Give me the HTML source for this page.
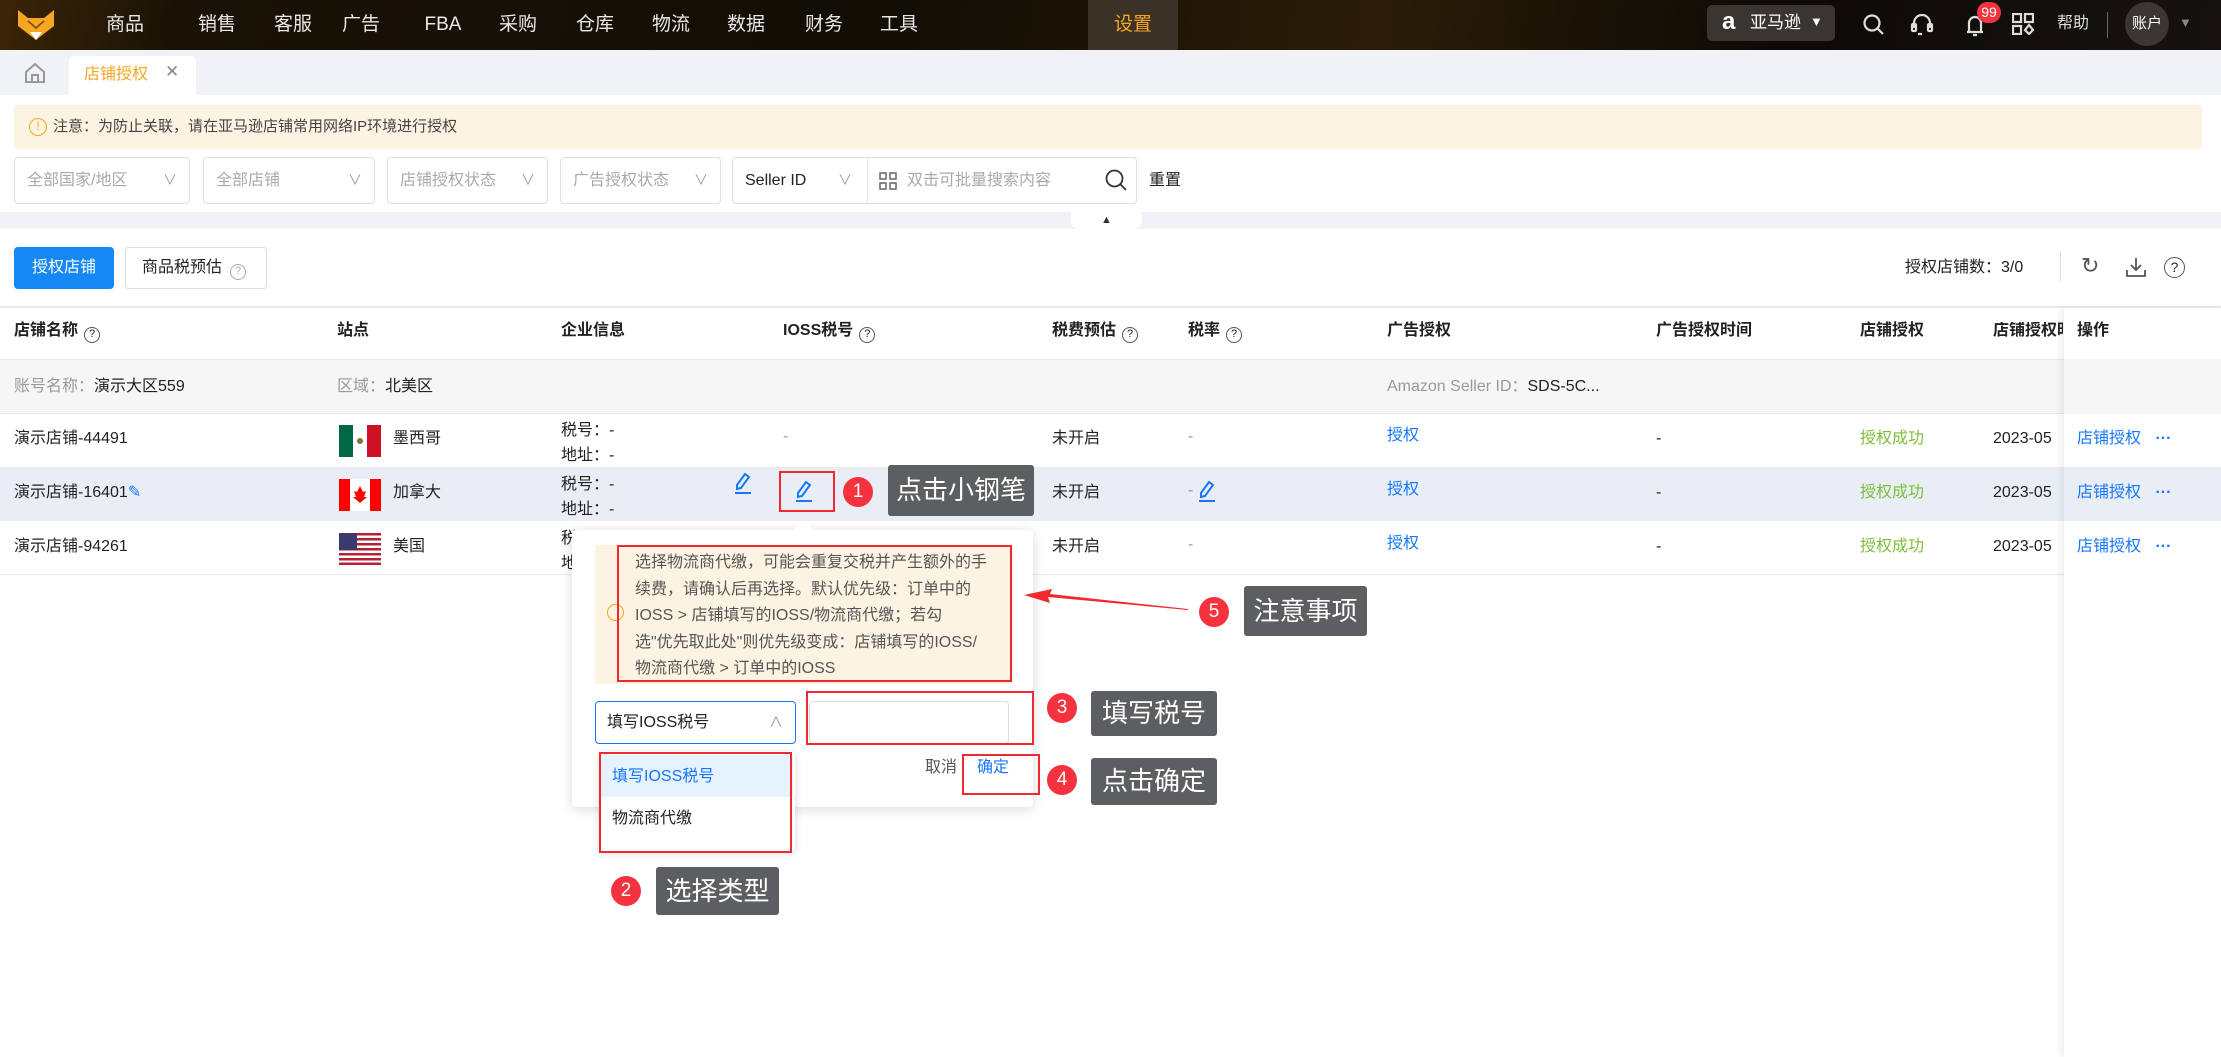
<!DOCTYPE html>
<html><head><meta charset="utf-8">
<style>
*{box-sizing:border-box;margin:0;padding:0}
body{width:2221px;height:1057px;overflow:hidden;background:#fff;font-family:"Liberation Sans","Noto Sans CJK SC",sans-serif;font-size:16px;line-height:1.15;color:#222;position:relative}
.a{position:absolute;white-space:nowrap}
.nav{left:0;top:0;width:2221px;height:50px;background:linear-gradient(100deg,#3a2506 0%,#1a1206 8%,#120d05 40%,#2a1c08 62%,#0d0a06 80%,#151210 100%)}
.ni{top:0;height:50px;line-height:50px;color:#e8e8e8;font-size:19px;transform:translateX(-50%)}
.sel{border:1px solid #dcdfe6;border-radius:4px;height:47px;top:157px;color:#aaa;line-height:45px;padding-left:12px;font-size:16px}
.sel i{position:absolute;right:12px;top:0;font-style:normal;color:#999;font-size:14px}
.th{top:322px;font-weight:bold;font-size:16px;color:#222}
.q{display:inline-block;width:16px;height:16px;border:1.5px solid #555;border-radius:50%;font-size:11px;line-height:13px;text-align:center;font-weight:normal;vertical-align:-2px;margin-left:6px}
.c{font-size:16px}
.blue{color:#1677ff}.green{color:#7cbf3a}.gray{color:#999}
.ann{background:#5d5e61;color:#fff;font-size:26px;border-radius:3px;text-align:center}
.num{width:30px;height:30px;border-radius:50%;background:#f5333f;color:#fff;text-align:center;line-height:30px;font-size:19px}
.rb{border:2.5px solid #f0292f}
</style></head><body>
<div class="a nav"></div>
<svg class="a" style="left:16px;top:8px" width="40" height="34" viewBox="0 0 40 34"><path d="M2 2 L12 10 L28 10 L38 2 L38 18 L20 32 L2 18Z" fill="#f5a623"/><path d="M14 24 L26 24 L20 32Z" fill="#fff"/><path d="M12 13 L20 20 L28 13" stroke="#7a4a08" stroke-width="1.5" fill="none"/></svg>
<div class="a ni" style="left:125px">商品</div><div class="a ni" style="left:217px">销售</div><div class="a ni" style="left:293px">客服</div><div class="a ni" style="left:361px">广告</div><div class="a ni" style="left:443px">FBA</div><div class="a ni" style="left:518px">采购</div><div class="a ni" style="left:595px">仓库</div><div class="a ni" style="left:671px">物流</div><div class="a ni" style="left:746px">数据</div><div class="a ni" style="left:824px">财务</div><div class="a ni" style="left:899px">工具</div>
<div class="a" style="left:1088px;top:0;width:90px;height:50px;background:#3b3127"></div>
<div class="a ni" style="left:1133px;color:#f5a623">设置</div>
<div class="a" style="left:1707px;top:5px;width:128px;height:36px;background:#3a3530;border-radius:5px"></div>
<div class="a" style="left:1722px;top:8px;color:#fff;font-size:24px;font-weight:bold;line-height:28px">a</div>
<div class="a" style="left:1750px;top:13px;color:#fff;font-size:17px">亚马逊</div>
<div class="a" style="left:1810px;top:15px;color:#fff;font-size:13px">▼</div>
<svg class="a" style="left:1862px;top:13px" width="24" height="24" viewBox="0 0 24 24" fill="none" stroke="#ddd" stroke-width="2.2"><circle cx="10" cy="10" r="7.5"/><path d="M15.5 15.5 L21 21"/></svg>
<svg class="a" style="left:1910px;top:12px" width="24" height="26" viewBox="0 0 24 26" fill="none" stroke="#ddd" stroke-width="2.2"><path d="M4 16 V11 a8 8 0 0 1 16 0 V16"/><rect x="2" y="12" width="4" height="7" rx="1"/><rect x="18" y="12" width="4" height="7" rx="1"/><path d="M8 22 H12"/></svg>
<svg class="a" style="left:1962px;top:12px" width="26" height="26" viewBox="0 0 26 26" fill="none" stroke="#ddd" stroke-width="2.2"><path d="M5 20 H21 M7 20 V11 a6 6 0 0 1 12 0 V20 M11 23 H15"/></svg>
<div class="a" style="left:1977px;top:2px;width:24px;height:21px;border-radius:11px;background:#f5333f;color:#fff;font-size:14px;text-align:center;line-height:21px">99</div>
<svg class="a" style="left:2012px;top:13px" width="22" height="22" viewBox="0 0 22 22" fill="none" stroke="#ddd" stroke-width="2.2"><rect x="1" y="1" width="8" height="8"/><rect x="13" y="1" width="8" height="8"/><rect x="1" y="13" width="8" height="8"/><path d="M17 12 L21 17 L17 21 L13 17Z"/></svg>
<div class="a" style="left:2057px;top:15px;color:#ddd;font-size:16px">帮助</div>
<div class="a" style="left:2107px;top:12px;width:1px;height:26px;background:#666"></div>
<div class="a" style="left:2125px;top:2px;width:44px;height:44px;border-radius:50%;background:#3a3632;color:#fff;font-size:15px;text-align:center;line-height:44px">账户</div>
<div class="a" style="left:2179px;top:16px;color:#888;font-size:13px">▼</div>
<!-- tab bar -->
<div class="a" style="left:0;top:50px;width:2221px;height:45px;background:#f1f2f5"></div>
<svg class="a" style="left:24px;top:62px" width="22" height="22" viewBox="0 0 22 22" fill="none" stroke="#999" stroke-width="2"><path d="M2 10 L11 2 L20 10 V20 H2Z M8 20 V13 H14 V20"/></svg>
<div class="a" style="left:69px;top:56px;width:127px;height:39px;background:#fff;border-radius:4px 4px 0 0"></div>
<div class="a" style="left:84px;top:66px;color:#f5a623;font-size:16px">店铺授权</div>
<div class="a" style="left:165px;top:62px;color:#888;font-size:17px">✕</div>
<!-- notice -->
<div class="a" style="left:14px;top:105px;width:2188px;height:44px;background:#fdf3e3;border-radius:3px"></div>
<div class="a" style="left:29px;top:118px;width:18px;height:18px;border:1.5px solid #f5a623;border-radius:50%;color:#f5a623;font-size:12px;text-align:center;line-height:15px">!</div>
<div class="a" style="left:53px;top:118px;font-size:15px;color:#444">注意：为防止关联，请在亚马逊店铺常用网络IP环境进行授权</div>
<!-- filters -->
<div class="a sel" style="left:14px;width:176px">全部国家/地区<i>∨</i></div>
<div class="a sel" style="left:203px;width:172px">全部店铺<i>∨</i></div>
<div class="a sel" style="left:387px;width:161px">店铺授权状态<i>∨</i></div>
<div class="a sel" style="left:560px;width:161px">广告授权状态<i>∨</i></div>
<div class="a sel" style="left:732px;width:405px;color:#222">Seller ID<i style="right:auto;left:105px">∨</i></div>
<div class="a" style="left:867px;top:158px;width:1px;height:45px;background:#e5e5e5"></div>
<svg class="a" style="left:879px;top:172px" width="18" height="18" viewBox="0 0 18 18" fill="none" stroke="#666" stroke-width="1.5"><rect x="1" y="1" width="6" height="6"/><rect x="11" y="1" width="6" height="6"/><rect x="1" y="11" width="6" height="6"/><rect x="11" y="11" width="6" height="6"/></svg>
<div class="a" style="left:907px;top:172px;color:#aaa;font-size:16px">双击可批量搜索内容</div>
<svg class="a" style="left:1104px;top:168px" width="24" height="24" viewBox="0 0 24 24" fill="none" stroke="#333" stroke-width="1.8"><circle cx="10.5" cy="10.5" r="8"/><path d="M16.5 16.5 L22 22"/></svg>
<div class="a" style="left:1149px;top:172px;font-size:16px">重置</div>
<div class="a" style="left:0;top:212px;width:2221px;height:17px;background:#f1f2f5"></div>
<div class="a" style="left:1071px;top:212px;width:71px;height:17px;background:#fff;border-radius:0 0 8px 8px;text-align:center;font-size:11px;line-height:17px;color:#333">▲</div>
<!-- buttons -->
<div class="a" style="left:14px;top:247px;width:100px;height:42px;background:#1688f5;border-radius:4px;color:#fff;text-align:center;line-height:42px;font-size:16px">授权店铺</div>
<div class="a" style="left:125px;top:247px;width:142px;height:42px;border:1px solid #ddd;border-radius:4px;line-height:40px;padding-left:16px;font-size:16px">商品税预估<span class="q" style="border-color:#aaa;color:#aaa;margin-left:8px">?</span></div>
<div class="a" style="left:1905px;top:259px;font-size:16px">授权店铺数：3/0</div>
<div class="a" style="left:2060px;top:252px;width:1px;height:30px;background:#ddd"></div>
<div class="a" style="left:2081px;top:253px;font-size:22px;color:#555">↻</div>
<svg class="a" style="left:2125px;top:256px" width="22" height="22" viewBox="0 0 22 22" fill="none" stroke="#555" stroke-width="1.8"><path d="M11 2 V14 M6 9 L11 14 L16 9 M2 14 V20 H20 V14"/></svg>
<div class="a q" style="left:2164px;top:257px;width:21px;height:21px;font-size:14px;line-height:18px;margin:0">?</div>
<!-- table -->
<div class="a" style="left:0;top:306px;width:2221px;height:2px;background:#e8e8e8"></div>
<div class="a th" style="left:14px">店铺名称<span class="q">?</span></div>
<div class="a th" style="left:337px">站点</div>
<div class="a th" style="left:561px">企业信息</div>
<div class="a th" style="left:783px">IOSS税号<span class="q">?</span></div>
<div class="a th" style="left:1052px">税费预估<span class="q">?</span></div>
<div class="a th" style="left:1188px">税率<span class="q">?</span></div>
<div class="a th" style="left:1387px">广告授权</div>
<div class="a th" style="left:1656px">广告授权时间</div>
<div class="a th" style="left:1860px">店铺授权</div>
<div class="a th" style="left:1993px;width:70px;overflow:hidden">店铺授权时间</div>
<div class="a" style="left:0;top:359px;width:2221px;height:55px;background:#f6f6f6;border-top:1px solid #e8e8e8;border-bottom:1px solid #e8e8e8"></div>
<div class="a c" style="left:14px;top:378px"><span class="gray">账号名称：</span>演示大区559</div>
<div class="a c" style="left:337px;top:378px"><span class="gray">区域：</span>北美区</div>
<div class="a c" style="left:1387px;top:378px"><span class="gray">Amazon Seller ID：</span>SDS-5C...</div>
<div class="a" style="left:0;top:467px;width:2221px;height:54px;background:#e9eef6"></div>
<div class="a" style="left:0;top:574px;width:2221px;height:1px;background:#e8e8e8"></div>
<div class="a" style="left:0;top:467px;width:2221px;height:1px;background:#e8e8e8"></div>
<!-- row1 -->
<div class="a c" style="left:14px;top:430px">演示店铺-44491</div>
<svg class="a" style="left:339px;top:425px" width="42" height="32"><rect width="14" height="32" fill="#006847"/><rect x="14" width="14" height="32" fill="#fff"/><rect x="28" width="14" height="32" fill="#ce1126"/><circle cx="21" cy="16" r="3" fill="#8a6d3b"/></svg>
<div class="a c" style="left:393px;top:430px">墨西哥</div>
<div class="a c" style="left:561px;top:418px;line-height:25px">税号：-<br>地址：-</div>
<div class="a gray" style="left:783px;top:428px">-</div>
<div class="a c" style="left:1052px;top:430px">未开启</div>
<div class="a gray" style="left:1188px;top:428px">-</div>
<div class="a c blue" style="left:1387px;top:427px">授权</div>
<div class="a c" style="left:1656px;top:430px">-</div>
<div class="a c green" style="left:1860px;top:430px">授权成功</div>
<div class="a c" style="left:1993px;top:430px">2023-05</div>
<!-- row2 -->
<div class="a c" style="left:14px;top:484px">演示店铺-16401<span class="blue">✎</span></div>
<svg class="a" style="left:339px;top:479px" width="42" height="32"><rect width="42" height="32" fill="#fff"/><rect width="11" height="32" fill="#f00"/><rect x="31" width="11" height="32" fill="#f00"/><path d="M21 7 L24 13 L27 12 L25 18 L28 18 L21 24 L14 18 L17 18 L15 12 L18 13Z" fill="#f00"/></svg>
<div class="a c" style="left:393px;top:484px">加拿大</div>
<div class="a c" style="left:561px;top:472px;line-height:25px">税号：-<br>地址：-</div>
<svg class="a" style="left:733px;top:472px" width="20" height="22" viewBox="0 0 20 22" fill="none" stroke="#1677ff" stroke-width="2"><path d="M12 2 L16 5 L8 16 L4 17 L4 13Z M2 21 H18"/></svg>
<svg class="a" style="left:794px;top:480px" width="20" height="22" viewBox="0 0 20 22" fill="none" stroke="#1677ff" stroke-width="2"><path d="M12 2 L16 5 L8 16 L4 17 L4 13Z M2 21 H18"/></svg>
<div class="a c" style="left:1052px;top:484px">未开启</div>
<div class="a gray" style="left:1188px;top:482px">-</div>
<svg class="a" style="left:1197px;top:480px" width="20" height="22" viewBox="0 0 20 22" fill="none" stroke="#1677ff" stroke-width="2"><path d="M12 2 L16 5 L8 16 L4 17 L4 13Z M2 21 H18"/></svg>
<div class="a c blue" style="left:1387px;top:481px">授权</div>
<div class="a c" style="left:1656px;top:484px">-</div>
<div class="a c green" style="left:1860px;top:484px">授权成功</div>
<div class="a c" style="left:1993px;top:484px">2023-05</div>
<!-- row3 -->
<div class="a c" style="left:14px;top:538px">演示店铺-94261</div>
<svg class="a" style="left:339px;top:533px" width="42" height="32"><rect width="42" height="32" fill="#fff"/><g fill="#b22234"><rect y="0" width="42" height="2.5"/><rect y="5" width="42" height="2.5"/><rect y="10" width="42" height="2.5"/><rect y="15" width="42" height="2.5"/><rect y="20" width="42" height="2.5"/><rect y="25" width="42" height="2.5"/><rect y="29.5" width="42" height="2.5"/></g><rect width="18" height="17" fill="#3c3b6e"/></svg>
<div class="a c" style="left:393px;top:538px">美国</div>
<div class="a c" style="left:561px;top:526px;line-height:25px">税号：-<br>地址：-</div>
<div class="a c" style="left:1052px;top:538px">未开启</div>
<div class="a gray" style="left:1188px;top:536px">-</div>
<div class="a c blue" style="left:1387px;top:535px">授权</div>
<div class="a c" style="left:1656px;top:538px">-</div>
<div class="a c green" style="left:1860px;top:538px">授权成功</div>
<div class="a c" style="left:1993px;top:538px">2023-05</div>
<!-- sticky op column -->
<div class="a" style="left:2064px;top:308px;width:157px;height:749px;background:#fff;box-shadow:-4px 0 6px rgba(0,0,0,0.06)"></div>
<div class="a" style="left:2064px;top:359px;width:157px;height:55px;background:#f6f6f6"></div>
<div class="a" style="left:2064px;top:467px;width:157px;height:54px;background:#e9eef6"></div>
<div class="a th" style="left:2077px">操作</div>
<div class="a c blue" style="left:2077px;top:430px">店铺授权 <b style="margin-left:10px">···</b></div>
<div class="a c blue" style="left:2077px;top:484px">店铺授权 <b style="margin-left:10px">···</b></div>
<div class="a c blue" style="left:2077px;top:538px">店铺授权 <b style="margin-left:10px">···</b></div>
<!-- popover -->
<div class="a" style="left:572px;top:530px;width:461px;height:277px;background:#fff;border-radius:4px;box-shadow:0 2px 12px rgba(0,0,0,0.15)"></div>
<div class="a" style="left:796px;top:523px;width:14px;height:14px;background:#fff;transform:rotate(45deg)"></div>
<div class="a" style="left:595px;top:545px;width:418px;height:139px;background:#fdf3e3"></div>
<div class="a" style="left:607px;top:604px;width:17px;height:17px;border:1.5px solid #f5a623;border-radius:50%"></div>
<div class="a" style="left:635px;top:550px;font-size:16px;line-height:26.5px;color:#555">选择物流商代缴，可能会重复交税并产生额外的手<br>续费，请确认后再选择。默认优先级：订单中的<br>IOSS &gt; 店铺填写的IOSS/物流商代缴；若勾<br>选"优先取此处"则优先级变成：店铺填写的IOSS/<br>物流商代缴 &gt; 订单中的IOSS</div>
<div class="a rb" style="left:617px;top:545px;width:395px;height:137px"></div>
<div class="a" style="left:595px;top:701px;width:201px;height:43px;border:1px solid #1677ff;border-radius:4px;padding-left:11px;line-height:41px;font-size:16px">填写IOSS税号<span style="position:absolute;right:12px;color:#999;font-size:14px">∧</span></div>
<div class="a" style="left:809px;top:701px;width:200px;height:43px;border:1px solid #ddd;border-radius:4px"></div>
<div class="a rb" style="left:806px;top:691px;width:228px;height:54px"></div>
<div class="a" style="left:925px;top:759px;font-size:16px;color:#555">取消</div>
<div class="a blue" style="left:977px;top:759px;font-size:16px">确定</div>
<div class="a rb" style="left:962px;top:754px;width:78px;height:41px"></div>
<div class="a" style="left:599px;top:751px;width:196px;height:100px;background:#fff;border-radius:4px;box-shadow:0 2px 8px rgba(0,0,0,0.15)"></div>
<div class="a" style="left:601px;top:755px;width:192px;height:42px;background:#e6f2fe"></div>
<div class="a blue" style="left:612px;top:768px;font-size:16px">填写IOSS税号</div>
<div class="a" style="left:612px;top:810px;font-size:16px">物流商代缴</div>
<div class="a rb" style="left:599px;top:752px;width:193px;height:101px"></div>
<!-- annotations -->
<div class="a rb" style="left:779px;top:471px;width:56px;height:41px"></div>
<div class="a num" style="left:843px;top:477px">1</div>
<div class="a ann" style="left:888px;top:465px;width:146px;height:51px;line-height:51px">点击小钢笔</div>
<div class="a num" style="left:611px;top:876px">2</div>
<div class="a ann" style="left:656px;top:867px;width:123px;height:48px;line-height:48px">选择类型</div>
<div class="a num" style="left:1047px;top:693px">3</div>
<div class="a ann" style="left:1091px;top:691px;width:126px;height:45px;line-height:45px">填写税号</div>
<div class="a num" style="left:1047px;top:765px">4</div>
<div class="a ann" style="left:1091px;top:758px;width:126px;height:47px;line-height:47px">点击确定</div>
<div class="a num" style="left:1199px;top:597px">5</div>
<div class="a ann" style="left:1244px;top:586px;width:123px;height:50px;line-height:50px">注意事项</div>
<svg class="a" style="left:1020px;top:585px" width="170" height="30"><path d="M168 25 L28 12 L30 18 L4 10 L32 4 L30 9 L168 24Z" fill="#f0292f"/></svg>
</body></html>
